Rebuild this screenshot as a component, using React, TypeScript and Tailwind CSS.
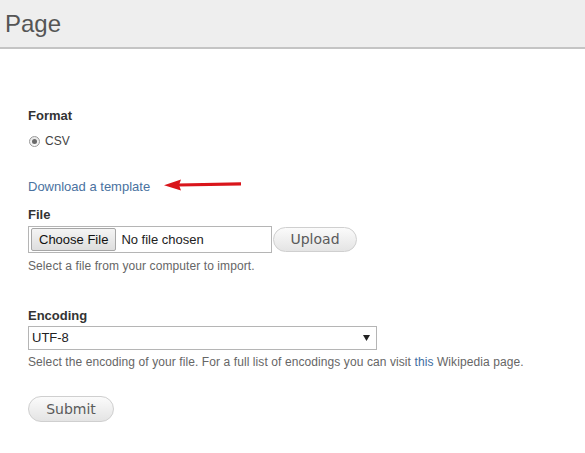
import React from 'react';

export default function App() {
  return (
    <div className="w-[585px] h-[453px] bg-white font-['Liberation_Sans',Arial,sans-serif] text-[#333]">
      {/* Header */}
      <div className="h-[49px] bg-[#eeeeee] border-b-2 border-[#c4c4c4] flex items-center">
        <h1 className="ml-[5px] mt-[1px] text-[24px] leading-none text-[#555]">Page</h1>
      </div>

      <div className="pl-[28px]">
        {/* Format */}
        <div className="mt-[58px] text-[13px] leading-[18px] font-bold">Format</div>
        <label className="mt-[7px] flex items-center h-[18px] text-[12px] text-[#444]">
          <span className="ml-[1px] w-[11px] h-[11px] rounded-full border border-[#9a9a9a] bg-gradient-to-b from-[#e6e6e6] to-[#fafafa] flex items-center justify-center">
            <span className="w-[5px] h-[5px] rounded-full bg-[#6a6a6a]" />
          </span>
          <span className="ml-[5px]">CSV</span>
        </label>

        {/* Download link */}
        <div className="mt-[28px] flex items-center h-[18px]">
          <a className="text-[13px] text-[#4a72a0]">Download a template</a>
          <svg className="ml-[14px] mt-[-4px]" width="78" height="12" viewBox="0 0 78 12">
            <path d="M14 4.6 L77 3.2 L77 6.4 L14 7.6 Z" fill="#d9151b" />
            <path d="M0 6.3 L17 0.5 L15 6 L17 11.5 Z" fill="#d9151b" />
          </svg>
        </div>

        {/* File */}
        <div className="mt-[10px] text-[13px] leading-[18px] font-bold">File</div>
        <div className="mt-[2px] flex items-center">
          <div className="w-[244px] h-[27px] border border-[#b5b5b5] flex items-center pl-[2px] bg-white">
            <button className="h-[23px] px-[7px] text-[13px] text-[#111] border border-[#a6a6a6] rounded-[2px] bg-gradient-to-b from-[#f4f4f4] to-[#dedede]">
              Choose File
            </button>
            <span className="ml-[5px] text-[13px] text-[#222]">No file chosen</span>
          </div>
          <button className="ml-[1px] w-[84px] h-[25px] rounded-full border border-[#cfcfcf] bg-gradient-to-b from-[#fbfbfb] to-[#e4e4e4] text-[14px] text-[#5a5a5a] font-['DejaVu_Sans',Verdana,sans-serif]">
            Upload
          </button>
        </div>
        <div className="mt-[5px] text-[12px] leading-[16px] tracking-[0.09px] text-[#666]">Select a file from your computer to import.</div>

        {/* Encoding */}
        <div className="mt-[33px] text-[13px] leading-[18px] font-bold">Encoding</div>
        <div className="mt-[1px] w-[349px] h-[24px] border border-[#b5b5b5] flex items-center justify-between pl-[3px] pr-[6px] text-[13px] text-[#222]">
          <span>UTF-8</span>
          <svg width="7" height="6" viewBox="0 0 7 6">
            <path d="M0 0 L7 0 L3.5 6 Z" fill="#222" />
          </svg>
        </div>
        <div className="mt-[4px] text-[12px] leading-[16px] tracking-[0.09px] text-[#666]">
          Select the encoding of your file. For a full list of encodings you can visit <a className="text-[#3f6d9f]">this</a> Wikipedia page.
        </div>

        {/* Submit */}
        <button className="mt-[26px] w-[86px] h-[26px] rounded-full border border-[#cfcfcf] bg-gradient-to-b from-[#fbfbfb] to-[#e4e4e4] text-[14px] text-[#5a5a5a] font-['DejaVu_Sans',Verdana,sans-serif]">
          Submit
        </button>
      </div>
    </div>
  );
}
